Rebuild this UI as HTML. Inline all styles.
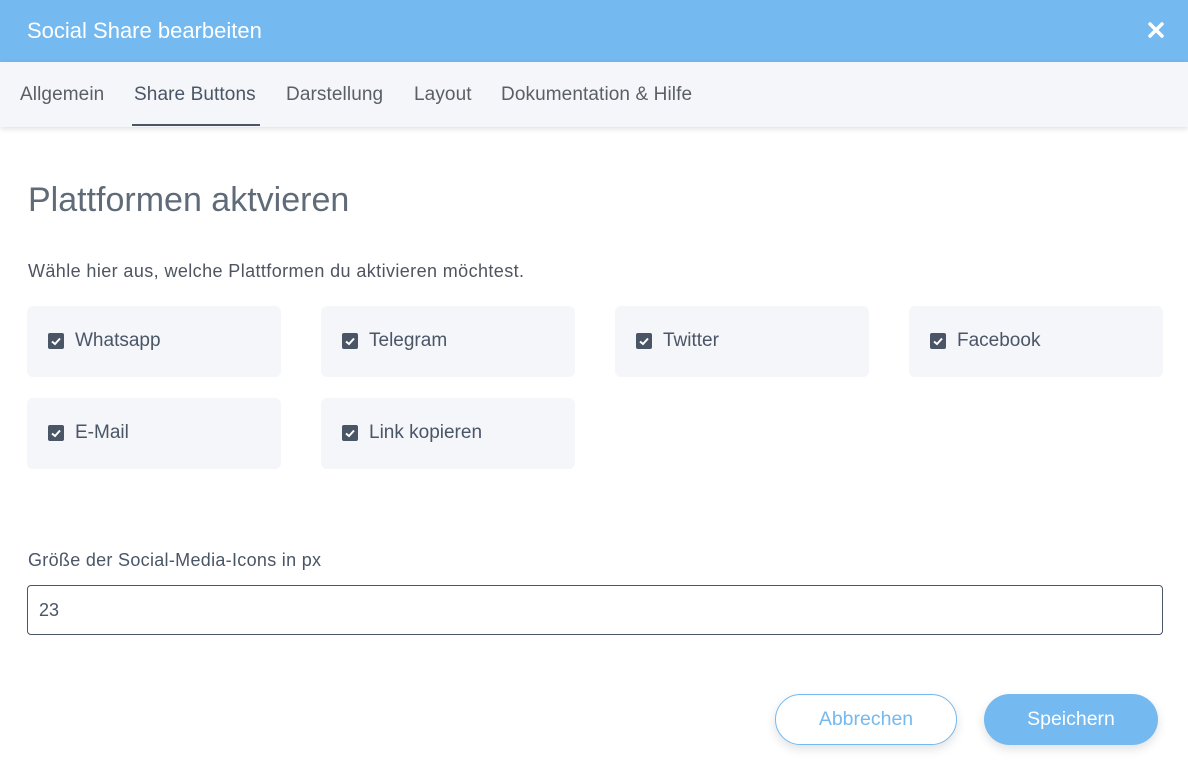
<!DOCTYPE html>
<html><head><meta charset="utf-8"><style>
*{box-sizing:border-box;margin:0;padding:0}
body{width:1188px;height:778px;background:#fff;font-family:"Liberation Sans",sans-serif;position:relative;overflow:hidden;color:#4a5566}
.hdr{position:absolute;left:0;top:0;width:1188px;height:62px;background:#74b9f0;color:#fff;font-size:22px;line-height:62px;padding-left:27px}
.x{position:absolute;left:1147px;top:21px}
.tabs{position:absolute;left:0;top:62px;width:1188px;height:65px;background:#f5f6fa;box-shadow:0 2px 5px rgba(0,0,0,.12)}
.tab{position:absolute;top:22px;font-size:19px;color:#5a5f66;letter-spacing:0.1px}
.ul{position:absolute;left:132px;top:124px;width:128px;height:2px;background:#4a5566}
h1{position:absolute;left:28px;top:181px;font-size:34px;font-weight:normal;color:#5f6b78}
.sub{position:absolute;left:28px;top:261px;font-size:18px;letter-spacing:0.4px;color:#4e5560}
.box{position:absolute;width:254px;height:71px;background:#f5f6fa;border-radius:6px}
.cb{position:absolute;left:21px;top:27px;width:16px;height:16px;background:#4a5566;border-radius:2px}
.lbl{position:absolute;left:48px;top:24px;font-size:19px;color:#4a5566}
.lab2{position:absolute;left:28px;top:550px;font-size:18px;letter-spacing:0.3px;color:#4a5566}
.inp{position:absolute;left:27px;top:585px;width:1136px;height:50px;border:1px solid #4a5566;border-radius:4px;font-size:18px;line-height:48px;padding-left:11px;color:#4a5566}
.btn{position:absolute;top:694px;height:51px;border-radius:26px;font-size:19.5px;text-align:center;line-height:51px;box-shadow:0 4px 10px rgba(0,0,0,.12)}
</style></head><body>
<div class="hdr">Social Share bearbeiten</div>
<svg class="x" width="18" height="18" viewBox="0 0 18 18"><path d="M3 3L15 15M15 3L3 15" stroke="#fff" stroke-width="3.5" stroke-linecap="round"/></svg>
<div class="tabs">
<div class="tab" style="left:20px">Allgemein</div>
<div class="tab" style="left:134px;color:#4a5566">Share Buttons</div>
<div class="tab" style="left:286px">Darstellung</div>
<div class="tab" style="left:414px">Layout</div>
<div class="tab" style="left:501px">Dokumentation &amp; Hilfe</div>
</div>
<div class="ul"></div>
<h1>Plattformen aktvieren</h1>
<div class="sub">Wähle hier aus, welche Plattformen du aktivieren möchtest.</div>

<div class="box" style="left:27px;top:306px"><div class="cb"><svg width="16" height="16"><path d="M4 8.5L7 11L12 5.5" stroke="#fff" stroke-width="2" fill="none"/></svg></div><div class="lbl">Whatsapp</div></div>
<div class="box" style="left:321px;top:306px"><div class="cb"><svg width="16" height="16"><path d="M4 8.5L7 11L12 5.5" stroke="#fff" stroke-width="2" fill="none"/></svg></div><div class="lbl">Telegram</div></div>
<div class="box" style="left:615px;top:306px"><div class="cb"><svg width="16" height="16"><path d="M4 8.5L7 11L12 5.5" stroke="#fff" stroke-width="2" fill="none"/></svg></div><div class="lbl">Twitter</div></div>
<div class="box" style="left:909px;top:306px"><div class="cb"><svg width="16" height="16"><path d="M4 8.5L7 11L12 5.5" stroke="#fff" stroke-width="2" fill="none"/></svg></div><div class="lbl">Facebook</div></div>
<div class="box" style="left:27px;top:398px"><div class="cb"><svg width="16" height="16"><path d="M4 8.5L7 11L12 5.5" stroke="#fff" stroke-width="2" fill="none"/></svg></div><div class="lbl">E-Mail</div></div>
<div class="box" style="left:321px;top:398px"><div class="cb"><svg width="16" height="16"><path d="M4 8.5L7 11L12 5.5" stroke="#fff" stroke-width="2" fill="none"/></svg></div><div class="lbl">Link kopieren</div></div>

<div class="lab2">Größe der Social-Media-Icons in px</div>
<div class="inp">23</div>
<div class="btn" style="left:775px;width:182px;border:1px solid #74b9f0;color:#74b9f0;background:#fff;line-height:49px">Abbrechen</div>
<div class="btn" style="left:984px;width:174px;background:#74b9f0;color:#fff">Speichern</div>
</body></html>
